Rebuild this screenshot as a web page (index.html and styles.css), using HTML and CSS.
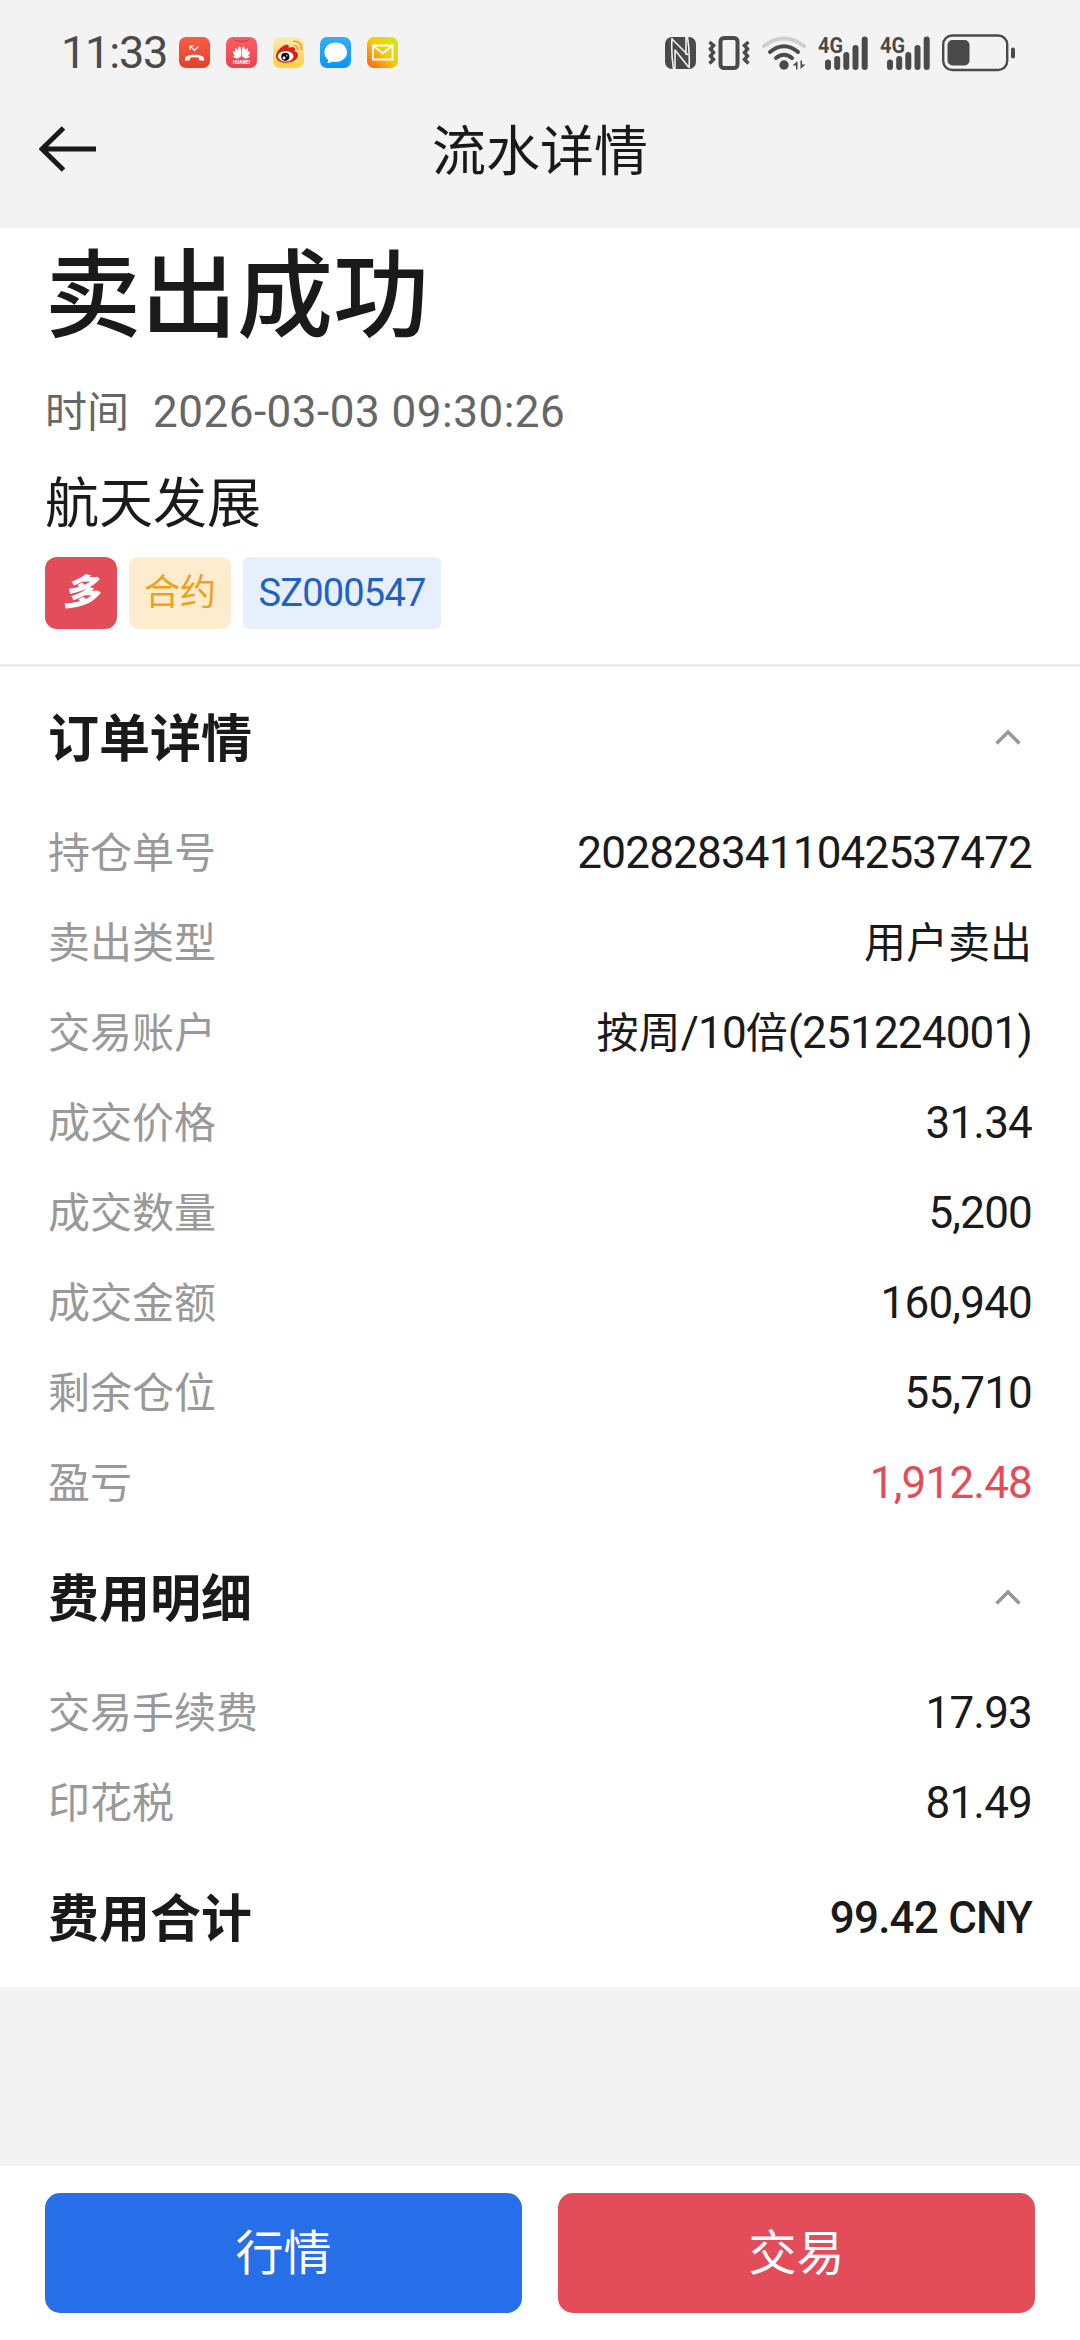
FILE: index.html
```html
<!DOCTYPE html>
<html lang="zh-CN">

<head>
    <meta charset="utf-8">
    <title>流水详情</title>
    <link rel="stylesheet" href="styles.css">
</head>

<body>
    <!-- 状态栏 -->
    <div class="status">
        <span class="clock">11:33</span>
        <div class="apps">
            <svg viewBox="0 0 31 31">
                <defs>
                    <linearGradient id="g1" x1="0" y1="0" x2="0" y2="1"><stop offset="0" stop-color="#fb5c43"/><stop offset="1" stop-color="#e63f2c"/></linearGradient>
                </defs>
                <rect width="31" height="31" rx="7" fill="url(#g1)"/>
                <path d="M6 21.500c0-5 19-5 19 0v2.300l-5-.6v-2.400q-4.500-1.300-9 0v2.400l-5 .6z" fill="#fff"/>
                <path d="M11 13V9h4M11.200 9.200l4.300 4.300 4-4" fill="none" stroke="#fff" stroke-width="1.200"/>
            </svg>
            <svg viewBox="0 0 31 31">
                <defs>
                    <linearGradient id="g2" x1="0" y1="0" x2="0" y2="1"><stop offset="0" stop-color="#fd5d65"/><stop offset="1" stop-color="#e6454d"/></linearGradient>
                </defs>
                <rect width="31" height="31" rx="7" fill="url(#g2)"/>
                <path d="M7.500 2.500q8 4 16 0" fill="none" stroke="#c9333d" stroke-width="1"/>
                <g fill="#fff">
                    <path id="petal" d="M15 20.500C12 16 11 11 13.500 9.300c1.800 1.200 2 6 1.500 11.200zM14.200 20.500C10 18 8.300 14 9.500 10.800c2.800 1.700 4.300 5.700 4.700 9.700zM13.500 20.800C9 20 6.800 17 7 14c3 .8 5.500 3.500 6.500 6.800zM13 21.400c-3 .6-5.200-.4-6-2.600 2.200 0 4.300 1 6 2.600z"/>
                    <use href="#petal" transform="matrix(-1 0 0 1 31 0)"/>
                </g>
                <text x="15.500" y="26.500" font-size="4.500" font-weight="700" text-anchor="middle" textLength="17" fill="#fff">HUAWEI</text>
            </svg>
            <svg viewBox="0 0 31 31">
                <defs>
                    <linearGradient id="g3" x1="0" y1="0" x2="0" y2="1"><stop offset="0" stop-color="#fdeab5"/><stop offset="1" stop-color="#fdd13f"/></linearGradient>
                </defs>
                <rect width="31" height="31" rx="7" fill="url(#g3)"/>
                <path d="M3 19C3 13 12 6 15 8c1.500 1 .5 3 .5 3s6-2 6.500 1c.2 1.500-.5 2.300-.5 2.300s3.500.7 3.500 4c0 4-6 7.500-12 7.500S3 23 3 19z" fill="#dc1f17"/>
                <ellipse cx="12.700" cy="19.200" rx="7.800" ry="5.300" fill="#fff"/>
                <circle cx="12.300" cy="19.800" r="4.100" fill="#111"/>
                <circle cx="11" cy="21" r="1.400" fill="#fff"/>
                <circle cx="13.800" cy="18.800" r=".7" fill="#fff"/>
                <path d="M20.500 8.500q4.500-.3 4 4.500M20 4.300q9-.8 8.500 8.700" fill="none" stroke="#efa02f" stroke-width="1.700"/>
            </svg>
            <svg viewBox="0 0 31 31">
                <defs>
                    <linearGradient id="g4" x1="0" y1="0" x2="0" y2="1"><stop offset="0" stop-color="#33b0fa"/><stop offset="1" stop-color="#0a93fb"/></linearGradient>
                </defs>
                <rect width="31" height="31" rx="7" fill="url(#g4)"/>
                <path d="M15.700 5.500c6.300 0 11.300 4.200 11.300 9.800s-5 9.700-11.300 9.700c-1.300 0-2.500-.2-3.600-.5-1.300 1-3 1.600-5 1.500.8-.8 1.100-1.800 1-3.300-2.300-1.800-3.700-4.400-3.700-7.400 0-5.600 5-9.800 11.300-9.800z" fill="#fff"/>
            </svg>
            <svg viewBox="0 0 31 31">
                <defs>
                    <linearGradient id="g5" x1="0" y1="1" x2="1" y2="0"><stop offset="0" stop-color="#ff5a1c"/><stop offset=".5" stop-color="#f9c80e"/><stop offset="1" stop-color="#c8f016"/></linearGradient>
                </defs>
                <rect width="31" height="31" rx="7" fill="url(#g5)"/>
                <path d="M6 8.500h19.500v14H6zM6.500 9l9.200 7.300L25 9" fill="none" stroke="#fff" stroke-width="1.800"/>
            </svg>
        </div>
        <div class="sys">
            <!-- NFC -->
            <svg class="nfc" viewBox="0 0 31 32">
                <rect width="31" height="32" rx="7" fill="#4a4a4a"/>
                <path d="M7 1Q6 16 8.500 32M22.500 0Q25 16 24 31M7 2l16 16M10 12.500V32M21 0v18M10 13l13.500 17" fill="none" stroke="#f3f3f3" stroke-width="1.600"/>
            </svg>
            <!-- 振动 -->
            <svg class="vib" viewBox="0 0 42 34" fill="none" stroke="#4a4a4a">
                <rect x="12.500" y="2" width="17" height="30" rx="3.500" stroke-width="4"/>
                <path d="M1.500 6l4 3.500-3 3.500 3 3.500-3 3.500 3 3.500-4 4M40.500 6l-4 3.500 3 3.500-3 3.500 3 3.500-3 3.500 4 4" stroke-width="3.500"/>
            </svg>
            <!-- WiFi -->
            <svg class="wifi" viewBox="0 0 44 34" fill="none" stroke-width="4" stroke-linecap="round">
                <path d="M2 10q20-15 40 0" stroke="#cfcfcf"/>
                <path d="M8 16q14-11.500 28 0M14 22q8-6.500 16 0" stroke="#4a4a4a"/>
                <circle cx="22" cy="29" r="4.700" fill="#4a4a4a"/>
                <path d="M30.500 29.500l5-4.500v8.500h-1.500v-4zM43.500 28.500l-5 4.500v-8.500h1.500v4z" fill="#4a4a4a"/>
            </svg>
            <!-- 信号 -->
            <svg class="sig" viewBox="0 -6 50 46">
                <text x="0" y="17" font-size="22" font-weight="700" textLength="25" lengthAdjust="spacingAndGlyphs" fill="#4a4a4a">4G</text>
                <path d="M10 26.500V31M19.200 23v8M28.300 19v12M37.500 12v19M46.700 3.500V31" fill="none" stroke="#4a4a4a" stroke-width="6" stroke-linecap="round"/>
            </svg>
            <svg class="sig" viewBox="0 -6 50 46">
                <text x="0" y="17" font-size="22" font-weight="700" textLength="25" lengthAdjust="spacingAndGlyphs" fill="#4a4a4a">4G</text>
                <path d="M10 26.500V31M19.200 23v8M28.300 19v12M37.500 12v19M46.700 3.500V31" fill="none" stroke="#4a4a4a" stroke-width="6" stroke-linecap="round"/>
            </svg>
            <!-- 电池 -->
            <svg class="bat" viewBox="0 0 74 38">
                <rect x="1.200" y="1.500" width="64" height="34.500" rx="9" fill="none" stroke="#4a4a4a" stroke-width="2.400"/>
                <rect x="5.500" y="6" width="22" height="25.500" rx="5" fill="#4a4a4a"/>
                <rect x="69" y="13.500" width="4" height="11" rx="2" fill="#4a4a4a"/>
            </svg>
        </div>
    </div>

    <!-- 导航 -->
    <div class="nav">
        <svg class="back" viewBox="0 0 58 46">
            <path d="M24.500 2L3 23l21.500 21M3 23h54" fill="none" stroke="#1a1a1a" stroke-width="5"/>
        </svg>
        <h1>流水详情</h1>
    </div>

    <!-- 成交结果 -->
    <div class="result">
        <h2>卖出成功</h2>
        <p class="time">时间<span class="num">2026-03-03 09:30:26</span></p>
        <p class="name">航天发展</p>
        <div class="tags">
            <span class="tag long">多</span>
            <span class="tag type">合约</span>
            <span class="tag code">SZ000547</span>
        </div>
    </div>

    <div class="detail">
        <div class="tit">
            <h3>订单详情</h3>
            <svg class="arr" viewBox="0 0 26 16"><path d="M1.500 14.500L13 3l11.500 11.500" fill="none" stroke="#999" stroke-width="3.500"/></svg>
        </div>
        <ul>
            <li><span>持仓单号</span><b class="num">2028283411042537472</b></li>
            <li><span>卖出类型</span><b>用户卖出</b></li>
            <li><span>交易账户</span><b>按周<i class="num">/10</i>倍<i class="num">(251224001)</i></b></li>
            <li><span>成交价格</span><b class="num">31.34</b></li>
            <li><span>成交数量</span><b class="num">5,200</b></li>
            <li><span>成交金额</span><b class="num">160,940</b></li>
            <li><span>剩余仓位</span><b class="num">55,710</b></li>
            <li><span>盈亏</span><b class="num red">1,912.48</b></li>
        </ul>

        <div class="tit">
            <h3>费用明细</h3>
            <svg class="arr" viewBox="0 0 26 16"><path d="M1.500 14.500L13 3l11.500 11.500" fill="none" stroke="#999" stroke-width="3.500"/></svg>
        </div>
        <ul>
            <li><span>交易手续费</span><b class="num">17.93</b></li>
            <li><span>印花税</span><b class="num">81.49</b></li>
        </ul>

        <div class="tit total">
            <h3>费用合计</h3>
            <b class="num">99.42 CNY</b>
        </div>
    </div>

    <!-- 底部按钮 -->
    <div class="btns">
        <a class="quote">行情</a>
        <a class="trade">交易</a>
    </div>
</body>

</html>
```
FILE: styles.css
```css
* {
    margin: 0;
    padding: 0;
    box-sizing: border-box;
}
body {
    display: flex;
    flex-direction: column;
    height: 2340px;
    background: #f3f3f3;
    color: #1a1a1a;
    font-family: Roboto, "Noto Sans CJK SC", sans-serif;
    font-size: 42px;
}
ul {
    list-style: none;
}
b, i {
    font-weight: 400;
    font-style: normal;
}
svg {
    display: block;
    flex: none;
}
/* 数字 */
.num {
    font-size: 44px;
    letter-spacing: -.8px;
}

/* 状态栏 */
.status {
    display: flex;
    align-items: center;
    height: 105px;
    padding: 0 64px 0 61px;
    color: #4a4a4a;
}
.clock {
    width: 118px;
    font-size: 45px;
    letter-spacing: -1.2px;
}
.apps {
    display: flex;
    gap: 16px;
}
.apps svg {
    width: 31px;
    height: 31px;
}
.sys {
    display: flex;
    align-items: center;
    margin-left: auto;
}
.nfc {
    width: 31px;
    height: 32px;
    margin-right: 12px;
}
.vib {
    width: 42px;
    height: 34px;
    margin-right: 12px;
}
.wifi {
    width: 44px;
    height: 34px;
    margin-right: 12px;
}
.sig {
    width: 50px;
    height: 46px;
    margin-right: 12px;
}
.bat {
    width: 74px;
    height: 38px;
}

/* 导航 */
.nav {
    position: relative;
    display: flex;
    justify-content: center;
    height: 123px;
}
.nav h1 {
    font-size: 54px;
    font-weight: 400;
    line-height: 96px;
}
.back {
    position: absolute;
    left: 39px;
    top: 21px;
    width: 58px;
    height: 46px;
}

/* 成交结果 */
.result {
    height: 439px;
    padding: 0 45px;
    border-bottom: 3px solid #eee;
    background: #fff;
}
.result h2 {
    font-size: 96px;
    font-weight: 500;
    line-height: 136px;
}
.time {
    margin-top: 18px;
    line-height: 60px;
    color: #666;
}
.time .num {
    margin-left: 24px;
    letter-spacing: .5px;
}
.name {
    margin-top: 27px;
    font-size: 54px;
    line-height: 70px;
}
.tags {
    display: flex;
    gap: 12px;
    margin-top: 17px;
}
.tag {
    height: 72px;
    font-size: 36px;
    line-height: 72px;
    text-align: center;
}
.long {
    width: 72px;
    border-radius: 12px;
    background: #e34d59;
    color: #fff;
    font-weight: 900;
    font-style: italic;
}
.type {
    width: 102px;
    border-radius: 9px;
    background: #ffeccf;
    color: #eca21c;
}
.code {
    width: 198px;
    border-radius: 6px;
    background: #e8effc;
    color: #1f63c1;
    font-size: 38px;
    letter-spacing: -.8px;
}

/* 订单 / 费用 */
.detail {
    height: 1320px;
    padding: 0 48px;
    background: #fff;
}
.tit {
    display: flex;
    justify-content: space-between;
    align-items: center;
    height: 140px;
    padding-bottom: 4px;
}
.tit h3 {
    font-size: 51px;
    font-weight: 700;
}
.arr {
    width: 26px;
    height: 16px;
    margin: 3px 11px 0 0;
}
li {
    display: flex;
    justify-content: space-between;
    height: 90px;
    line-height: 93px;
}
li span {
    color: #999;
}
.red {
    color: #e34d59;
}
.total b {
    margin-top: 6px;
    font-weight: 500;
}

/* 底部按钮 */
.btns {
    display: flex;
    gap: 36px;
    height: 174px;
    margin-top: auto;
    padding: 27px 45px;
    background: #fff;
}
.btns a {
    flex: 1;
    border-radius: 15px;
    color: #fff;
    font-size: 48px;
    line-height: 122px;
    text-align: center;
}
.quote {
    background: #276fe8;
}
.trade {
    background: #e34d59;
}
```
